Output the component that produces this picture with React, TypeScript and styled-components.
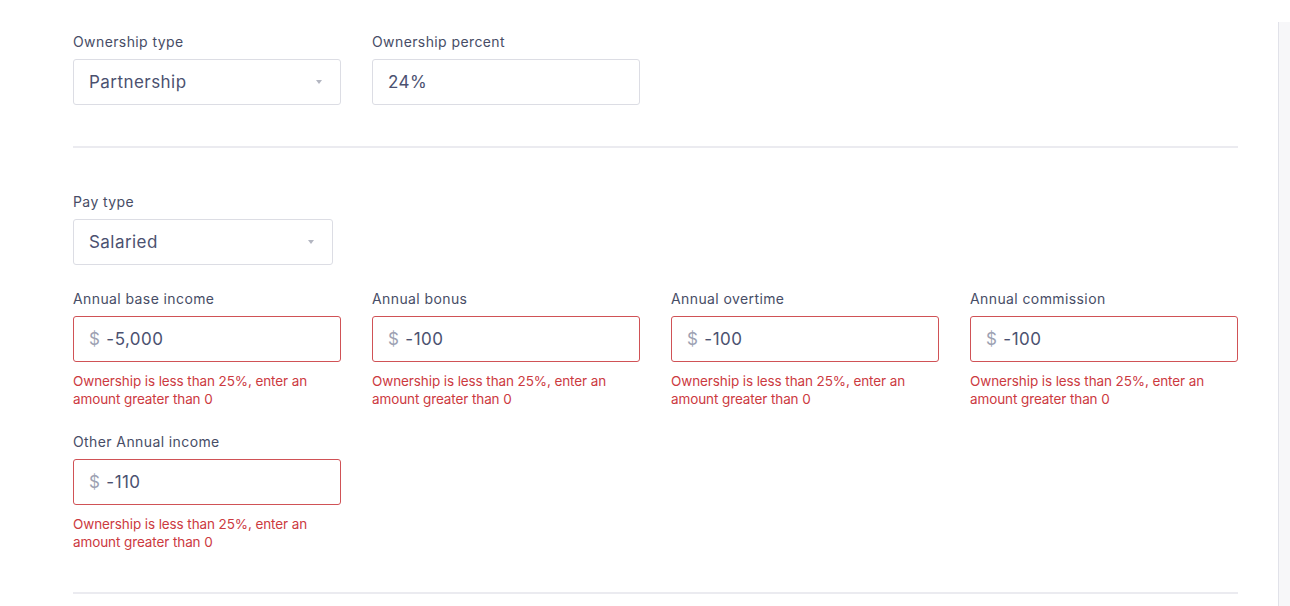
import React, { FunctionComponent } from 'react';
import styled, { createGlobalStyle } from 'styled-components';

const GlobalStyle = createGlobalStyle`
  body {
    margin: 0;
    background: #ffffff;
    font-family: Inter, Roboto, 'Liberation Sans', Arial, sans-serif;
  }
`;

const Page = styled.div`
  display: flex;
  min-height: 606px;
`;

const Main = styled.div`
  flex: 1;
  padding: 33px 40px 0 73px;
`;

const Edge = styled.div`
  width: 11px;
  margin-top: 22px;
  border-left: 1px solid #e1e2e9;
  background: #f7f7f9;
`;

const Grid = styled.div<{ $top?: number }>`
  display: grid;
  grid-template-columns: repeat(4, 268px);
  column-gap: 31px;
  row-gap: 25px;
  margin-top: ${p => p.$top ?? 0}px;
`;

const Divider = styled.hr<{ $top: number; $bottom: number }>`
  border: none;
  height: 2px;
  background: #ebebf0;
  margin: ${p => p.$top}px 0 ${p => p.$bottom}px;
`;

const Field = styled.div<{ $width?: number }>`
  display: flex;
  flex-direction: column;
  width: ${p => (p.$width ? `${p.$width}px` : 'auto')};
`;

const Label = styled.label`
  font-size: 14px;
  line-height: 18px;
  letter-spacing: 0.4px;
  color: #474d66;
  margin-bottom: 8px;
`;

const Box = styled.div<{ $error?: boolean }>`
  box-sizing: border-box;
  height: 46px;
  display: flex;
  align-items: center;
  padding: 0 16px 0 15px;
  border: 1px solid ${p => (p.$error ? '#d05256' : '#dcdde4')};
  border-radius: 3px;
  background: #fff;
  font-size: 17px;
  letter-spacing: 0.45px;
  color: #4b5170;
`;

const Value = styled.span`
  flex: 1;
`;

const Currency = styled.span`
  color: #9da2b3;
  margin-right: 6px;
`;

const Caret = styled.span`
  width: 0;
  height: 0;
  border-left: 3px solid transparent;
  border-right: 3px solid transparent;
  border-top: 4px solid #b3b6c1;
  margin-right: 2px;
`;

const ErrorText = styled.div`
  margin-top: 10px;
  font-size: 13.5px;
  line-height: 18px;
  letter-spacing: -0.1px;
  color: #cc3a3f;
`;

const SelectField: FunctionComponent<{ label: string; value: string; width?: number }> = ({
  label,
  value,
  width
}) => (
  <Field $width={width}>
    <Label>{label}</Label>
    <Box>
      <Value>{value}</Value>
      <Caret />
    </Box>
  </Field>
);

const MoneyField: FunctionComponent<{ label: string; value: string }> = ({ label, value }) => (
  <Field>
    <Label>{label}</Label>
    <Box $error>
      <Currency>$</Currency>
      <Value>{value}</Value>
    </Box>
    <ErrorText>
      Ownership is less than 25%, enter an
      <br />
      amount greater than 0
    </ErrorText>
  </Field>
);

const incomes = [
  { label: 'Annual base income', value: '-5,000' },
  { label: 'Annual bonus', value: '-100' },
  { label: 'Annual overtime', value: '-100' },
  { label: 'Annual commission', value: '-100' },
  { label: 'Other Annual income', value: '-110' }
];

const App: FunctionComponent = () => (
  <Page>
    <GlobalStyle />
    <Main>
      <Grid>
        <SelectField label="Ownership type" value="Partnership" />
        <Field>
          <Label>Ownership percent</Label>
          <Box>
            <Value>24%</Value>
          </Box>
        </Field>
      </Grid>
      <Divider $top={41} $bottom={45} />
      <SelectField label="Pay type" value="Salaried" width={260} />
      <Grid $top={25}>
        {incomes.map(i => (
          <MoneyField key={i.label} label={i.label} value={i.value} />
        ))}
      </Grid>
      <Divider $top={41} $bottom={0} />
    </Main>
    <Edge />
  </Page>
);

export default App;
